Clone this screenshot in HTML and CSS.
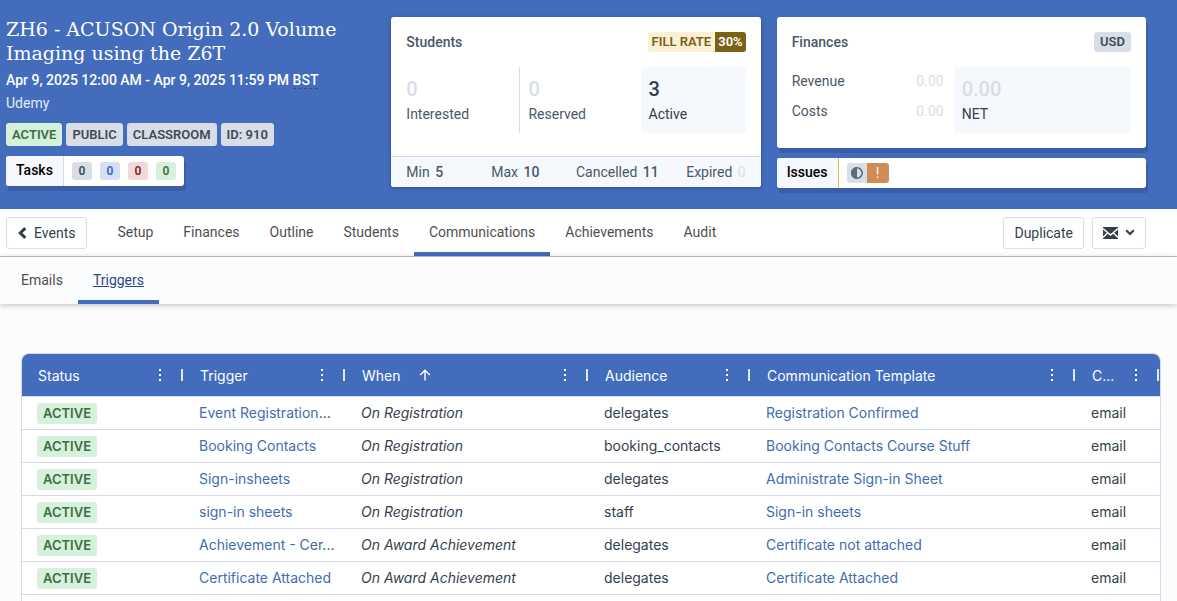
FILE: index.html
```html
<!DOCTYPE html>
<html lang="en">
<head>
    <meta charset="UTF-8">
    <meta name="viewport" content="width=device-width, initial-scale=1.0">
    <title>ZH6 - ACUSON Origin 2.0 Volume Imaging using the Z6T</title>
    <link rel="stylesheet" href="styles.css">
</head>
<body>
    <header class="event-header">
        <div class="event-info">
            <h1>ZH6 - ACUSON Origin 2.0 Volume Imaging using the Z6T</h1>
            <p class="event-dates">Apr 9, 2025 12:00 AM - Apr 9, 2025 11:59 PM <abbr class="timezone">BST</abbr></p>
            <p class="event-location">Udemy</p>
            <div class="badges">
                <span class="badge badge-green">ACTIVE</span>
                <span class="badge">PUBLIC</span>
                <span class="badge">CLASSROOM</span>
                <span class="badge">ID: 910</span>
            </div>
            <div class="strip tasks">
                <div class="strip-label">Tasks</div>
                <div class="strip-body">
                    <span class="count">0</span>
                    <span class="count count-blue">0</span>
                    <span class="count count-red">0</span>
                    <span class="count count-green">0</span>
                </div>
            </div>
        </div>

        <section class="card students">
            <div class="card-body">
                <div class="card-head">
                    <h2>Students</h2>
                    <div class="fill-rate"><span class="fill-label">FILL RATE</span><span class="fill-value">30%</span></div>
                </div>
                <div class="stats">
                    <div class="stat">
                        <div class="stat-value muted">0</div>
                        <div class="stat-label">Interested</div>
                    </div>
                    <div class="stat divided">
                        <div class="stat-value muted">0</div>
                        <div class="stat-label">Reserved</div>
                    </div>
                    <div class="stat boxed">
                        <div class="stat-value">3</div>
                        <div class="stat-label">Active</div>
                    </div>
                </div>
            </div>
            <div class="card-footer">
                <div>Min <b>5</b></div>
                <div>Max <b>10</b></div>
                <div>Cancelled <b>11</b></div>
                <div class="last">Expired <span class="muted">0</span></div>
            </div>
        </section>

        <div class="finance-column">
            <section class="card finances">
                <div class="card-body">
                    <div class="card-head">
                        <h2>Finances</h2>
                        <span class="badge badge-small">USD</span>
                    </div>
                    <div class="finance-grid">
                        <div class="finance-lines">
                            <div class="finance-line"><span>Revenue</span><span class="muted">0.00</span></div>
                            <div class="finance-line"><span>Costs</span><span class="muted">0.00</span></div>
                        </div>
                        <div class="stat boxed net">
                            <div class="stat-value muted">0.00</div>
                            <div class="stat-label">NET</div>
                        </div>
                    </div>
                </div>
            </section>
            <div class="strip issues">
                <div class="strip-label">Issues</div>
                <div class="strip-body">
                    <div class="issue">
                        <span class="issue-icon">
                            <svg width="12" height="12" viewBox="0 0 12 12">
                                <circle cx="6" cy="6" r="5.2" fill="none" stroke="#5b6b7d" stroke-width="1.6"/>
                                <path d="M6 0a6 6 0 0 0 0 12z" fill="#5b6b7d"/>
                            </svg>
                        </span>
                        <span class="issue-alert">!</span>
                    </div>
                </div>
            </div>
        </div>
    </header>

    <nav class="main-nav">
        <a href="#" class="btn back">
            <svg width="9" height="12" viewBox="0 0 9 12"><path d="M7.3 1.2L2.3 6l5 4.8" fill="none" stroke="#343f4e" stroke-width="3"/></svg>
            Events
        </a>
        <div class="tabs">
            <a href="#" class="tab">Setup</a>
            <a href="#" class="tab">Finances</a>
            <a href="#" class="tab">Outline</a>
            <a href="#" class="tab">Students</a>
            <a href="#" class="tab active">Communications</a>
            <a href="#" class="tab">Achievements</a>
            <a href="#" class="tab">Audit</a>
        </div>
        <div class="actions">
            <button type="button" class="btn">Duplicate</button>
            <button type="button" class="btn" aria-label="Email options">
                <svg width="15" height="12" viewBox="0 0 15 12">
                    <rect width="15" height="12" fill="#343f4e"/>
                    <path d="M0 1.6L7.5 8 15 1.6M0 10.6L4.8 5.8M15 10.6L10.2 5.8" fill="none" stroke="#fff" stroke-width="1.4"/>
                </svg>
                <svg width="10" height="7" viewBox="0 0 10 7"><path d="M1.2 1.3L5 5l3.8-3.7" fill="none" stroke="#343f4e" stroke-width="2.2"/></svg>
            </button>
        </div>
    </nav>

    <nav class="sub-nav">
        <a href="#" class="tab">Emails</a>
        <a href="#" class="tab active">Triggers</a>
    </nav>

    <main class="content">
        <div class="grid-wrap">
            <table class="grid">
                <colgroup>
                    <col class="col-normal">
                    <col class="col-normal">
                    <col class="col-when">
                    <col class="col-normal">
                    <col>
                    <col class="col-channel">
                </colgroup>
                <thead>
                    <tr>
                        <th><div class="th"><span>Status</span><button type="button" class="menu" aria-label="Status menu"><i></i><i></i><i></i></button></div></th>
                        <th><div class="th"><span>Trigger</span><button type="button" class="menu" aria-label="Trigger menu"><i></i><i></i><i></i></button></div></th>
                        <th><div class="th"><span>When</span><svg class="sort" width="12" height="12" viewBox="0 0 12 12"><path d="M6 11.5V1.5M1.2 6L6 1.2 10.8 6" fill="none" stroke="#fff" stroke-width="1.4"/></svg><button type="button" class="menu" aria-label="When menu"><i></i><i></i><i></i></button></div></th>
                        <th><div class="th"><span>Audience</span><button type="button" class="menu" aria-label="Audience menu"><i></i><i></i><i></i></button></div></th>
                        <th><div class="th"><span>Communication Template</span><button type="button" class="menu" aria-label="Template menu"><i></i><i></i><i></i></button></div></th>
                        <th><div class="th"><span>C...</span><button type="button" class="menu" aria-label="Column menu"><i></i><i></i><i></i></button></div></th>
                    </tr>
                </thead>
                <tbody>
                    <tr>
                        <td><span class="badge badge-green badge-row">ACTIVE</span></td>
                        <td><a href="#">Event Registration</a>...</td>
                        <td><em>On Registration</em></td>
                        <td>delegates</td>
                        <td><a href="#">Registration Confirmed</a></td>
                        <td>email</td>
                    </tr>
                    <tr>
                        <td><span class="badge badge-green badge-row">ACTIVE</span></td>
                        <td><a href="#">Booking Contacts</a></td>
                        <td><em>On Registration</em></td>
                        <td>booking_contacts</td>
                        <td><a href="#">Booking Contacts Course Stuff</a></td>
                        <td>email</td>
                    </tr>
                    <tr>
                        <td><span class="badge badge-green badge-row">ACTIVE</span></td>
                        <td><a href="#">Sign-insheets</a></td>
                        <td><em>On Registration</em></td>
                        <td>delegates</td>
                        <td><a href="#">Administrate Sign-in Sheet</a></td>
                        <td>email</td>
                    </tr>
                    <tr>
                        <td><span class="badge badge-green badge-row">ACTIVE</span></td>
                        <td><a href="#">sign-in sheets</a></td>
                        <td><em>On Registration</em></td>
                        <td>staff</td>
                        <td><a href="#">Sign-in sheets</a></td>
                        <td>email</td>
                    </tr>
                    <tr>
                        <td><span class="badge badge-green badge-row">ACTIVE</span></td>
                        <td><a href="#">Achievement - Cer</a>...</td>
                        <td><em>On Award Achievement</em></td>
                        <td>delegates</td>
                        <td><a href="#">Certificate not attached</a></td>
                        <td>email</td>
                    </tr>
                    <tr>
                        <td><span class="badge badge-green badge-row">ACTIVE</span></td>
                        <td><a href="#">Certificate Attached</a></td>
                        <td><em>On Award Achievement</em></td>
                        <td>delegates</td>
                        <td><a href="#">Certificate Attached</a></td>
                        <td>email</td>
                    </tr>
                </tbody>
            </table>
        </div>
    </main>
</body>
</html>
```

FILE: styles.css
```css
* {
    margin: 0;
    padding: 0;
    box-sizing: border-box;
}

body {
    font-family: Roboto, sans-serif;
    font-size: 14px;
    line-height: 20px;
    color: #343f4e;
    background: #fbfcfe;
    min-height: 100vh;
    display: flex;
    flex-direction: column;
}

a {
    text-decoration: none;
}

/* Header */
.event-header {
    background: #436cbc;
    padding: 17px 31px 21px 6px;
    display: grid;
    grid-template-columns: repeat(3, minmax(0, 1fr));
    gap: 16px;
    align-items: start;
}

.event-info {
    color: #fff;
}

h1 {
    font-family: "Roboto Slab", "DejaVu Serif", serif;
    font-size: 19px;
    font-weight: 400;
    line-height: 24px;
}

.event-dates {
    margin-top: 5px;
    font-size: 14px;
    font-weight: 500;
}

.timezone {
    text-decoration: none;
    border-bottom: 1px dashed #4a4a4a;
}

.event-location {
    margin-top: 3px;
    color: #e4eaf5;
}

.badges {
    display: flex;
    gap: 4px;
    margin-top: 10px;
}

.badge {
    padding: 0 6px;
    border-radius: 3px;
    background: #d8dee7;
    color: #3f4a59;
    font-size: 13px;
    font-weight: 600;
    line-height: 23px;
}

.badge-green {
    background: #d5f1dc;
    color: #3d6e41;
}

.badge-small {
    line-height: 20px;
}

.strip {
    display: flex;
    height: 30px;
    border-radius: 3px;
    background: #fff;
    box-shadow: 2px 5px 0 rgba(0, 0, 0, 0.12);
    overflow: hidden;
}

.strip-label {
    padding: 0 10px;
    background: #f5f8fc;
    border-right: 1px solid #d8dee7;
    color: #000;
    font-size: 14px;
    font-weight: 500;
    line-height: 29px;
}

.strip-body {
    display: flex;
    align-items: center;
    gap: 8px;
    padding: 0 8px;
}

.tasks {
    width: fit-content;
    margin-top: 10px;
}

.issues .strip-label {
    border-color: #e3bd3c;
}

.count {
    width: 20px;
    border-radius: 3px;
    background: #d8dee7;
    color: #3f4a59;
    font-size: 12px;
    font-weight: 600;
    line-height: 18px;
    text-align: center;
}

.count-blue {
    background: #d2e1f7;
    color: #3c62ae;
}

.count-red {
    background: #f1d9d9;
    color: #7d241e;
}

.count-green {
    background: #d5f1dc;
    color: #3d6e41;
}

/* Cards */
.card {
    border-radius: 3px;
    background: #fff;
    color: #4a5868;
    overflow: hidden;
}

.students {
    box-shadow: 0 1px 4px rgba(0, 0, 0, 0.25);
}

.students .card-body {
    padding-bottom: 23px;
}

.finances {
    box-shadow: 2px 5px 0 rgba(0, 0, 0, 0.12);
}

.card-body {
    padding: 15px;
}

.card-head {
    display: flex;
    align-items: center;
    justify-content: space-between;
    margin-bottom: 15px;
}

h2 {
    font-size: 14px;
    font-weight: 500;
    line-height: 20px;
}

.fill-rate {
    display: flex;
    border-radius: 3px;
    overflow: hidden;
    font-size: 13px;
    font-weight: 600;
    line-height: 20px;
}

.fill-label {
    padding: 0 4px;
    background: #faf0d6;
    color: #7a6217;
}

.fill-value {
    padding: 0 3px;
    background: #7a6217;
    color: #fff;
}

.stats {
    display: grid;
    grid-template-columns: repeat(3, 1fr);
}

.stat {
    height: 66px;
    padding-top: 11px;
}

.stat-value {
    color: #343f4e;
    font-size: 20px;
    font-weight: 500;
    line-height: 22px;
}

.stat-label {
    margin-top: 4px;
}

.divided {
    padding-left: 8px;
    border-left: 1px solid #d8dee7;
}

.boxed {
    margin-left: 8px;
    padding-left: 8px;
    border-radius: 3px;
    background: #f5f8fc;
    color: #343f4e;
}

.net {
    margin-left: 0;
}

.muted,
.stat-value.muted {
    color: #d8dee7;
}

.card-footer {
    display: grid;
    grid-template-columns: repeat(4, 1fr);
    padding: 5px 15px;
    border-top: 1px solid #d8dee7;
    background: #f5f8fc;
    white-space: nowrap;
}

.card-footer b,
.card-footer .muted {
    margin-left: 2px;
}

.card-footer b {
    font-weight: 500;
}

.card-footer .last {
    text-align: right;
}

.finance-column {
    display: flex;
    flex-direction: column;
    gap: 10px;
}

.finance-grid {
    display: grid;
    grid-template-columns: 6fr 7fr;
    gap: 10px;
}

.finance-lines {
    display: flex;
    flex-direction: column;
    gap: 2px;
}

.finance-line {
    display: flex;
    justify-content: space-between;
    line-height: 28px;
}

.issue {
    display: flex;
    border-radius: 3px;
    overflow: hidden;
    line-height: 20px;
}

.issue-icon {
    display: flex;
    align-items: center;
    justify-content: center;
    width: 20px;
    background: #d8dee7;
}

.issue-alert {
    width: 22px;
    background: #cf8c56;
    color: #fff;
    text-align: center;
}

/* Navigation */
.main-nav {
    display: flex;
    align-items: center;
    height: 48px;
    padding: 0 31px 0 6px;
    border-bottom: 1px solid #c4c4c4;
    background: #fff;
}

.btn {
    display: flex;
    align-items: center;
    gap: 7px;
    height: 32px;
    padding: 0 10px;
    border: 1px solid #d8dee7;
    border-radius: 3px;
    background: #fff;
    color: #343f4e;
    font-family: inherit;
    font-size: 14px;
    line-height: 20px;
    cursor: pointer;
}

.back {
    padding: 0 11px;
}

.tabs {
    display: flex;
    align-self: stretch;
    margin-left: 15px;
}

.tab {
    padding: 0 15px;
    border-bottom: 4px solid transparent;
    color: #4f4f4f;
    line-height: 47px;
}

.tab.active {
    border-color: #436cbc;
}

.actions {
    display: flex;
    gap: 8px;
    margin-left: auto;
}

.sub-nav {
    display: flex;
    height: 47px;
    padding-left: 6px;
    box-shadow: 0 1px 6px rgba(0, 0, 0, 0.25);
}

.sub-nav .active {
    color: #2d4a82;
    text-decoration: underline;
}

/* Triggers table */
.content {
    flex: 1;
    display: flex;
    padding: 49px 16px 0 21px;
}

.grid-wrap {
    flex: 1;
    min-width: 0;
    border: 1px solid #d5dae6;
    border-bottom: 0;
    border-radius: 8px 8px 0 0;
    background: #fff;
    overflow: hidden;
}

.grid {
    width: 100%;
    table-layout: fixed;
    border-spacing: 0;
    font-family: Inter, sans-serif;
    font-size: 14px;
}

.col-normal {
    width: 162px;
}

.col-when {
    width: 243px;
}

.col-channel {
    width: 84px;
}

.grid th {
    height: 43px;
    border-bottom: 1px solid #d5dae6;
    background: #436cbc;
    color: #fff;
    font-weight: 400;
    text-align: left;
}

.th {
    display: flex;
    align-items: center;
    height: 42px;
    padding-left: 16px;
    white-space: nowrap;
}

.th span {
    padding-top: 2px;
}

.menu {
    display: flex;
    flex-direction: column;
    align-items: center;
    justify-content: center;
    gap: 3px;
    width: 40px;
    height: 12px;
    margin: 0 1px 0 auto;
    padding-right: 4px;
    border: 0;
    border-right: 2px solid #e3e7ee;
    background: none;
}

.menu i {
    width: 2px;
    height: 2px;
    background: #fff;
}

.sort {
    margin-left: 18px;
}

.grid td {
    height: 33px;
    padding: 0 15px;
    border-bottom: 1px solid #d5dae6;
    white-space: nowrap;
}

.grid td a {
    color: #436cb0;
}

.badge-row {
    display: inline-block;
    line-height: 21px;
    vertical-align: middle;
}
```
